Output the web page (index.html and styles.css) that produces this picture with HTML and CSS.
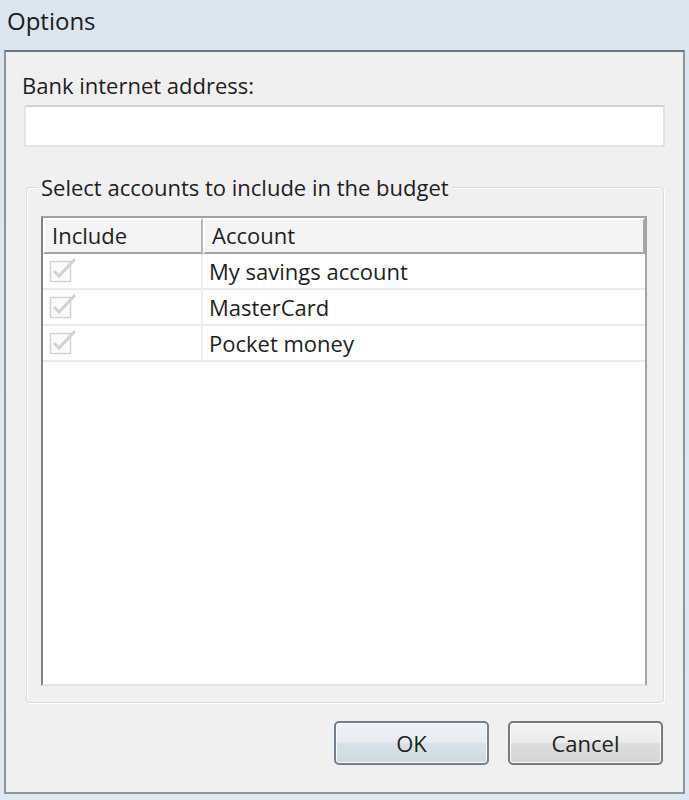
FILE: index.html
```html
<!DOCTYPE html>
<html>
<head>
<meta charset="utf-8">
<link rel="stylesheet" href="styles.css">
</head>
<body>
<div class="window">
  <div class="titlebar">Options</div>
  <div class="panel">
    <div class="label">Bank internet address:</div>
    <div class="textbox"></div>
    <fieldset class="group">
      <legend class="group-title">Select accounts to include in the budget</legend>
      <div class="listview">
        <div class="row header">
          <div class="cell col-include"><span class="htext">Include</span></div>
          <div class="cell col-account"><span class="htext">Account</span></div>
        </div>
        <div class="row item">
          <div class="cell col-include"><span class="check"><svg viewBox="0 0 28 28" width="28" height="28"><rect x="1.5" y="5.5" width="20" height="20" fill="#fbfbfb" stroke="#d4d4d4" stroke-width="1.5"/><path d="M5 15 L10 20 L26 3" fill="none" stroke="#d2d2d2" stroke-width="3"/></svg></span></div>
          <div class="cell col-account">My savings account</div>
        </div>
        <div class="row item">
          <div class="cell col-include"><span class="check"><svg viewBox="0 0 28 28" width="28" height="28"><rect x="1.5" y="5.5" width="20" height="20" fill="#fbfbfb" stroke="#d4d4d4" stroke-width="1.5"/><path d="M5 15 L10 20 L26 3" fill="none" stroke="#d2d2d2" stroke-width="3"/></svg></span></div>
          <div class="cell col-account">MasterCard</div>
        </div>
        <div class="row item">
          <div class="cell col-include"><span class="check"><svg viewBox="0 0 28 28" width="28" height="28"><rect x="1.5" y="5.5" width="20" height="20" fill="#fbfbfb" stroke="#d4d4d4" stroke-width="1.5"/><path d="M5 15 L10 20 L26 3" fill="none" stroke="#d2d2d2" stroke-width="3"/></svg></span></div>
          <div class="cell col-account">Pocket money</div>
        </div>
      </div>
    </fieldset>
    <div class="buttons">
      <div class="btn btn-default">OK</div>
      <div class="btn">Cancel</div>
    </div>
  </div>
</div>
</body>
</html>
```
FILE: styles.css
```css
html, body {
  margin: 0;
  padding: 0;
}
body {
  width: 689px;
  height: 800px;
  overflow: hidden;
  background: linear-gradient(180deg, #dbe5f0 0%, #dfe8f2 100%);
  font-family: "Open Sans", "Noto Sans", sans-serif;
  color: #1e1e1e;
}
.window {
  display: flex;
  flex-direction: column;
  height: 800px;
}
.titlebar {
  height: 50px;
  padding-left: 7px;
  font-size: 24px;
  line-height: 42px;
  color: #1b1b1b;
  box-sizing: border-box;
}
.panel {
  margin: 0 4px 6px 4px;
  height: 744px;
  box-sizing: border-box;
  background: #f0f0f0;
  border: 2px solid #8e949b;
  border-top-color: #70767d;
  padding: 21px 18px 27px 18px;
  display: flex;
  flex-direction: column;
  font-size: 22px;
}
.label {
  height: 24px;
  line-height: 24px;
  margin-left: -2px;
}
.textbox {
  margin-top: 8px;
  height: 42px;
  box-sizing: border-box;
  background: #fff;
  border: 2px solid #e2e3e5;
  border-top-color: #cfd1d4;
  border-radius: 2px;
}
.group {
  margin: 28px 1px 0 2px;
  padding: 17px 16px 15px 14px;
  flex: 1;
  min-height: 0;
  border: 1px solid #d5dbe0;
  box-shadow: inset 1px 1px 0 #ffffff, 1px 1px 0 #ffffff;
  border-radius: 4px;
  min-width: 0;
}
.group-title {
  padding: 0 3px;
  margin-left: -3px;
  line-height: 24px;
  height: 24px;
  background: #f0f0f0;
}
.listview {
  height: 470px;
  box-sizing: border-box;
  background: #fff;
  border: 2px solid #a3a3a3;
  border-left-color: #7f848b;
  border-bottom-color: #e4e4e4;
  display: flex;
  flex-direction: column;
}
.row {
  display: flex;
}
.cell {
  box-sizing: border-box;
}
.col-include {
  width: 160px;
}
.col-account {
  flex: 1;
}
.header {
  height: 36px;
  background: #f4f4f4;
}
.header .cell {
  border: 2px solid #ffffff;
  border-bottom: 2px solid #a5a5a5;
  border-right: 2px solid #b9b9b9;
  line-height: 30px;
  padding-left: 7px;
}
.header .col-account {
  border-right-color: #a5a5a5;
}
.htext {
  display: inline-block;
}
.item {
  height: 36px;
  border-bottom: 2px solid #ececec;
  box-sizing: border-box;
}
.item .cell {
  line-height: 34px;
}
.item .col-include {
  border-right: 2px solid #ececec;
  padding-left: 6px;
  padding-top: 2px;
}
.item .col-account {
  padding-left: 6px;
}
.check {
  display: block;
  width: 28px;
  height: 28px;
}
.check svg {
  display: block;
}
.buttons {
  margin-top: 18px;
  margin-right: 2px;
  display: flex;
  justify-content: flex-end;
  gap: 19px;
}
.btn {
  width: 155px;
  height: 44px;
  box-sizing: border-box;
  border: 2px solid #777b80;
  border-radius: 5px;
  background: linear-gradient(180deg, #f3f3f3 0%, #ececec 48%, #dddddd 52%, #d3d3d3 100%);
  box-shadow: inset 0 0 0 1px #fbfbfb;
  text-align: center;
  line-height: 40px;
  font-size: 22px;
  color: #1e1e1e;
}
.btn-default {
  border-color: #6f8090;
  background: linear-gradient(180deg, #eef2f6 0%, #e6ecf1 48%, #d8e1e9 52%, #cfd9e2 100%);
}
```
